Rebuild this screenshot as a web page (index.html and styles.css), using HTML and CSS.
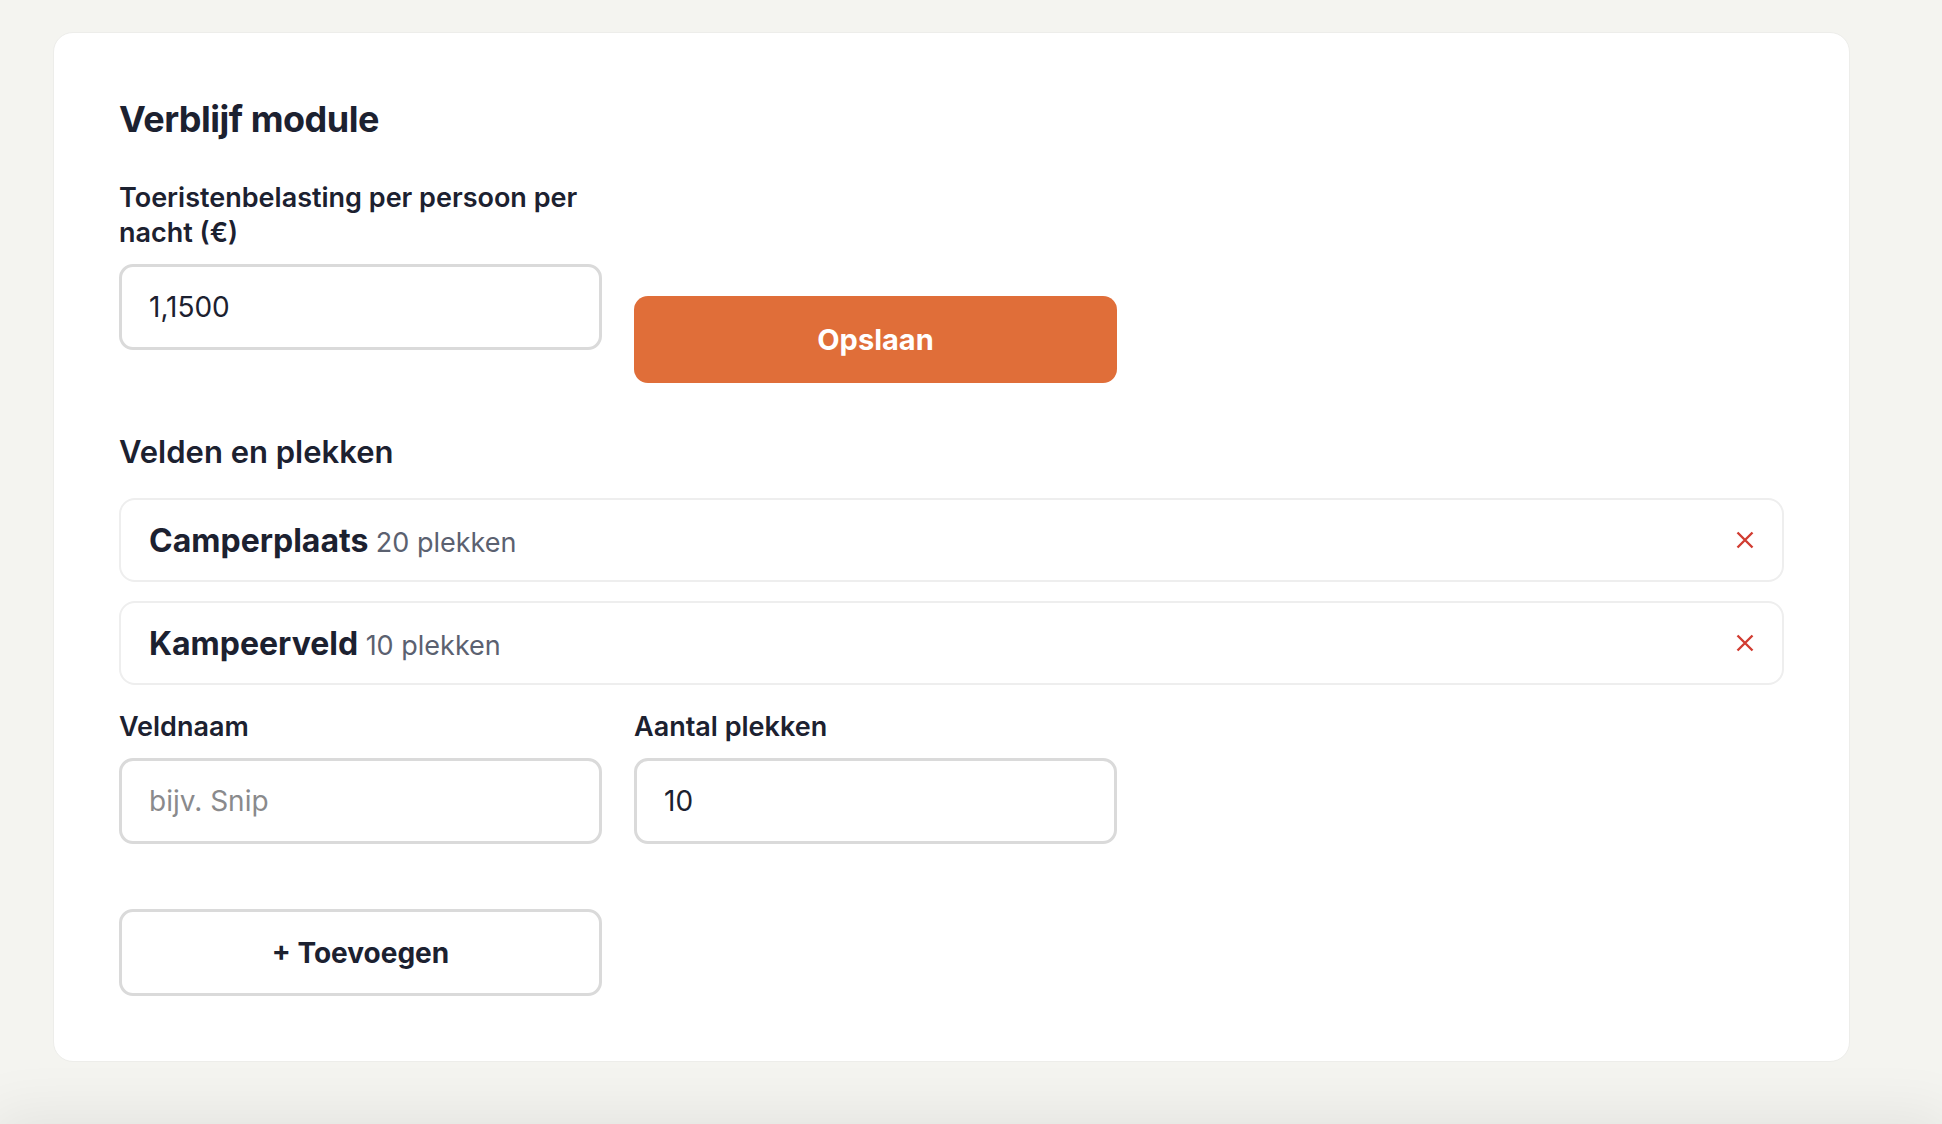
FILE: index.html
```html
<!DOCTYPE html>
<html lang="nl">
<head>
<meta charset="utf-8">
<title>Verblijf module</title>
<link rel="stylesheet" href="styles.css">
</head>
<body>
<div class="page">
  <section class="card">
    <h1 class="title">Verblijf module</h1>

    <div class="tax-row">
      <div class="field">
        <label class="label" for="tax">Toeristenbelasting per persoon per nacht (€)</label>
        <input class="input" id="tax" type="text" value="1,1500">
      </div>
      <button class="btn-primary" type="button">Opslaan</button>
    </div>

    <h2 class="subtitle">Velden en plekken</h2>

    <ul class="fields-list">
      <li class="field-item">
        <span class="item-text"><strong class="item-name">Camperplaats</strong> <span class="item-count">20 plekken</span></span>
        <button class="remove" type="button" aria-label="Verwijderen">
          <svg viewBox="0 0 18 18" width="18" height="18"><path d="M1.5 1.5 L16.5 16.5 M16.5 1.5 L1.5 16.5" stroke="#d13d32" stroke-width="2.4" fill="none" stroke-linecap="butt"/></svg>
        </button>
      </li>
      <li class="field-item">
        <span class="item-text"><strong class="item-name">Kampeerveld</strong> <span class="item-count">10 plekken</span></span>
        <button class="remove" type="button" aria-label="Verwijderen">
          <svg viewBox="0 0 18 18" width="18" height="18"><path d="M1.5 1.5 L16.5 16.5 M16.5 1.5 L1.5 16.5" stroke="#d13d32" stroke-width="2.4" fill="none" stroke-linecap="butt"/></svg>
        </button>
      </li>
    </ul>

    <div class="add-row">
      <div class="field">
        <label class="label" for="naam">Veldnaam</label>
        <input class="input" id="naam" type="text" placeholder="bijv. Snip">
      </div>
      <div class="field">
        <label class="label" for="aantal">Aantal plekken</label>
        <input class="input" id="aantal" type="text" value="10">
      </div>
    </div>

    <button class="btn-secondary" type="button">+ Toevoegen</button>
  </section>
</div>
<div class="bottom-bar"></div>
</body>
</html>
```

FILE: styles.css
```css
* { box-sizing: border-box; }

html, body {
  margin: 0;
  height: 100%;
}

body {
  background: #f4f4f0;
  font-family: Inter, "Noto Sans", "Liberation Sans", sans-serif;
  color: #1c2130;
  overflow: hidden;
}

.page {
  padding: 32px 0 0 53px;
}

.card {
  width: 1797px;
  background: #ffffff;
  border: 1px solid #ededea;
  border-radius: 20px;
  padding: 65px 65px 65px 65px;
}

.title {
  margin: 0;
  font-size: 36px;
  line-height: 43px;
  font-weight: 700;
  letter-spacing: -0.5px;
}

.tax-row {
  display: grid;
  grid-template-columns: 483px 483px;
  column-gap: 32px;
  align-items: start;
  margin-top: 39px;
}

.field {
  display: flex;
  flex-direction: column;
}

.label {
  font-size: 27px;
  line-height: 35px;
  font-weight: 600;
  margin-bottom: 14px;
}

.input {
  height: 86px;
  width: 100%;
  border: 3px solid #dadada;
  border-radius: 14px;
  padding: 0 27px;
  font-family: inherit;
  font-size: 28px;
  color: #1c2130;
  background: #fff;
  outline: none;
}

.input::placeholder {
  color: #8a8a8c;
}

.btn-primary {
  margin-top: 116px;
  height: 87px;
  border: none;
  border-radius: 14px;
  background: #e06e39;
  color: #ffffff;
  font-family: inherit;
  font-size: 29px;
  font-weight: 700;
}

.subtitle {
  margin: 51px 0 0;
  font-size: 31px;
  line-height: 36px;
  font-weight: 600;
}

.fields-list {
  list-style: none;
  margin: 28px 0 0;
  padding: 0;
  display: flex;
  flex-direction: column;
  gap: 19px;
}

.field-item {
  height: 84px;
  border: 2px solid #eeeeee;
  border-radius: 16px;
  padding: 0 28px;
  display: flex;
  align-items: center;
  justify-content: space-between;
}

.item-name {
  font-size: 32px;
  font-weight: 700;
  margin-right: 3px;
}

.item-count {
  font-size: 27px;
  color: #5b6170;
  font-weight: 400;
}

.remove {
  border: none;
  background: none;
  padding: 0;
  width: 18px;
  height: 18px;
  display: flex;
}

.add-row {
  display: grid;
  grid-template-columns: 483px 483px;
  column-gap: 32px;
  margin-top: 24px;
}

.btn-secondary {
  display: block;
  margin-top: 65px;
  width: 483px;
  height: 87px;
  border: 3px solid #dadada;
  border-radius: 14px;
  background: #fff;
  color: #1c2130;
  font-family: inherit;
  font-size: 28px;
  font-weight: 700;
}

.bottom-bar {
  position: fixed;
  left: 0;
  right: 0;
  top: 1124px;
  height: 80px;
  background: #f4f4f0;
  box-shadow: 0 0 60px 10px rgba(0, 0, 0, 0.07);
}
```
